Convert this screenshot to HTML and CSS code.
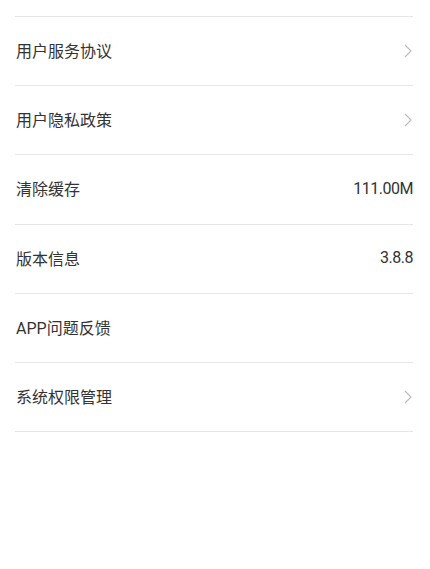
FILE: index.html
```html
<!DOCTYPE html>
<html lang="zh-CN">

<head>
    <meta charset="UTF-8">
    <meta name="viewport" content="width=device-width, initial-scale=1.0">
    <title>设置</title>
    <link rel="stylesheet" href="styles.css">
</head>

<body>
    <div class="settings">
        <div class="row">
            <span class="row-title">用户服务协议</span>
            <svg class="chevron" viewBox="0 0 8 14"><path d="M1 1l6 6-6 6" /></svg>
        </div>
        <div class="row">
            <span class="row-title">用户隐私政策</span>
            <svg class="chevron" viewBox="0 0 8 14"><path d="M1 1l6 6-6 6" /></svg>
        </div>
        <div class="row">
            <span class="row-title">清除缓存</span>
            <span class="row-value">111.00M</span>
        </div>
        <div class="row">
            <span class="row-title">版本信息</span>
            <span class="row-value">3.8.8</span>
        </div>
        <div class="row">
            <span class="row-title">APP问题反馈</span>
        </div>
        <div class="row">
            <span class="row-title">系统权限管理</span>
            <svg class="chevron" viewBox="0 0 8 14"><path d="M1 1l6 6-6 6" /></svg>
        </div>
    </div>
</body>

</html>
```

FILE: styles.css
```css
body {
    margin: 0;
    padding: 0;
    background-color: #fff;
    font-family: Roboto, "Noto Sans CJK SC", sans-serif;
    color: #333;
}

.settings {
    padding: 16px 17px 0 15px;
}

.row {
    height: 68.2px;
    display: flex;
    align-items: center;
    justify-content: space-between;
    border-top: 1px solid #e6e6e6;
}

.row:last-child {
    border-bottom: 1px solid #e6e6e6;
}

.row-title {
    font-size: 16px;
    padding-left: 1px;
    margin-bottom: 2px;
}

.row-value {
    font-size: 16px;
    letter-spacing: -0.5px;
    margin-bottom: 2px;
}

.chevron {
    width: 8px;
    height: 14px;
    margin-right: 1px;
    fill: none;
    stroke: #bdbdbd;
    stroke-width: 1.2;
}
```
